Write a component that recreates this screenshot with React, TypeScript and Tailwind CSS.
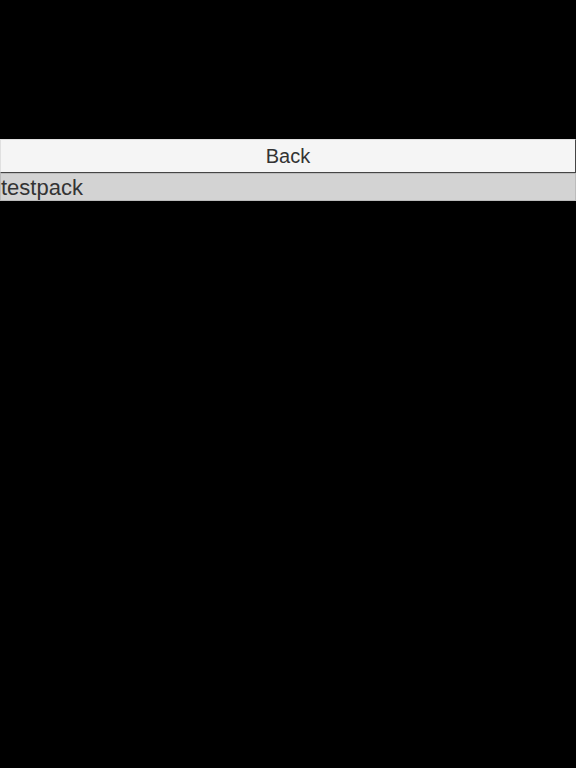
import React from "react";

export default function App() {
  return (
    <div className="w-[576px] h-[768px] bg-black" style={{ fontFamily: '"Liberation Sans", Arial, sans-serif' }}>
      <div className="pt-[139px] flex flex-col">
        <button className="w-full h-[34px] bg-[#f5f5f5] border border-t-[#e0e0e0] border-l-[#e0e0e0] border-b-[#444] border-r-[#444] text-[20px] text-[#333] flex items-center justify-center">
          Back
        </button>
        <div className="w-full h-[28px] bg-[#d3d3d3] border border-[#bbb] text-[22px] text-[#333] leading-[26px] pt-[2px] flex items-center">
          testpack
        </div>
      </div>
    </div>
  );
}
